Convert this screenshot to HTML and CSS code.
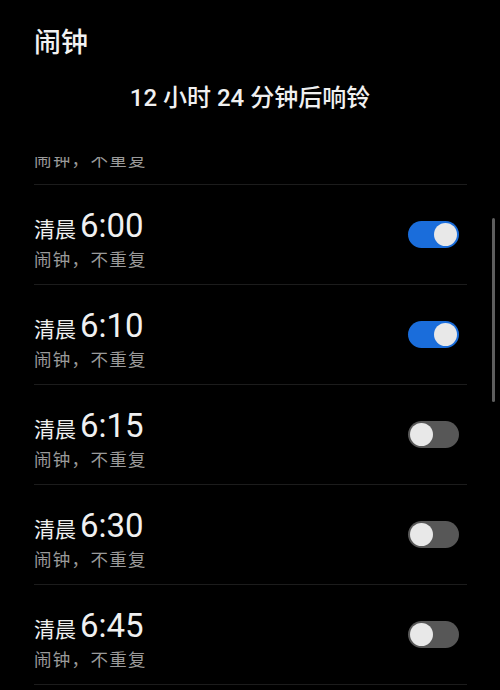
FILE: index.html
```html
<!DOCTYPE html>
<html lang="zh-CN">
<head>
<meta charset="utf-8">
<link rel="stylesheet" href="styles.css">
</head>
<body>
<div class="screen">
  <header class="header">
    <h1 class="title">闹钟</h1>
    <p class="next">12 小时 24 分钟后响铃</p>
  </header>
  <div class="list">
    <div class="list-inner">
      <div class="row">
        <div class="info">
          <div class="time"><span class="period">清晨</span><span class="clock">5:45</span></div>
          <div class="desc">闹钟，不重复</div>
        </div>
        <div class="switch off"><span class="knob"></span></div>
      </div>
      <div class="row">
        <div class="info">
          <div class="time"><span class="period">清晨</span><span class="clock">6:00</span></div>
          <div class="desc">闹钟，不重复</div>
        </div>
        <div class="switch on"><span class="knob"></span></div>
      </div>
      <div class="row">
        <div class="info">
          <div class="time"><span class="period">清晨</span><span class="clock">6:10</span></div>
          <div class="desc">闹钟，不重复</div>
        </div>
        <div class="switch on"><span class="knob"></span></div>
      </div>
      <div class="row">
        <div class="info">
          <div class="time"><span class="period">清晨</span><span class="clock">6:15</span></div>
          <div class="desc">闹钟，不重复</div>
        </div>
        <div class="switch off"><span class="knob"></span></div>
      </div>
      <div class="row">
        <div class="info">
          <div class="time"><span class="period">清晨</span><span class="clock">6:30</span></div>
          <div class="desc">闹钟，不重复</div>
        </div>
        <div class="switch off"><span class="knob"></span></div>
      </div>
      <div class="row">
        <div class="info">
          <div class="time"><span class="period">清晨</span><span class="clock">6:45</span></div>
          <div class="desc">闹钟，不重复</div>
        </div>
        <div class="switch off"><span class="knob"></span></div>
      </div>
    </div>
  </div>
  <div class="scrollbar"></div>
</div>
</body>
</html>
```
FILE: styles.css
```css
html, body {
  margin: 0;
  padding: 0;
  background: #000;
}
body {
  font-family: "Roboto", "Noto Sans CJK SC", sans-serif;
  color: #f0f0f0;
}
.screen {
  position: relative;
  width: 500px;
  height: 690px;
  overflow: hidden;
  background: #000;
}
.header {
  height: 157px;
  padding: 0 34px;
  box-sizing: border-box;
}
.title {
  margin: 0;
  padding-top: 23px;
  font-family: "Noto Sans CJK SC", sans-serif;
  font-size: 27px;
  font-weight: 500;
  line-height: 36px;
  color: #f2f2f2;
}
.next {
  margin: 24px 0 0;
  text-align: center;
  font-family: "Roboto", "Noto Sans CJK SC", sans-serif;
  font-size: 24px;
  font-weight: 500;
  line-height: 30px;
  color: #f0f0f0;
}
.list {
  height: 533px;
  overflow: hidden;
}
.list-inner {
  margin: -72px 33px 0 34px;
}
.row {
  height: 100px;
  box-sizing: border-box;
  border-bottom: 1px solid #1c1c1c;
  display: flex;
  align-items: center;
  justify-content: space-between;
  padding: 0 8px 0 0;
}
.info {
  display: flex;
  flex-direction: column;
  padding-top: 10px;
}
.time {
  display: flex;
  align-items: baseline;
  line-height: 36px;
}
.period {
  font-family: "Noto Sans CJK SC", sans-serif;
  font-size: 21px;
  color: #f0f0f0;
  margin-right: 4px;
}
.clock {
  font-family: "Roboto", sans-serif;
  font-size: 33px;
  font-weight: 400;
  color: #f0f0f0;
}
.desc {
  font-family: "Noto Sans CJK SC", sans-serif;
  font-size: 17.5px;
  line-height: 26px;
  color: #9a9a9a;
  letter-spacing: 1.3px;
}
.switch {
  position: relative;
  width: 51px;
  height: 27px;
  border-radius: 14px;
  flex: none;
}
.switch.on {
  background: #1a6ddb;
}
.switch.off {
  background: #575757;
}
.knob {
  position: absolute;
  top: 2px;
  width: 23px;
  height: 23px;
  border-radius: 50%;
  background: #e8e8e8;
}
.switch.on .knob {
  right: 2px;
}
.switch.off .knob {
  left: 2px;
}
.scrollbar {
  position: absolute;
  left: 492px;
  top: 218px;
  width: 3px;
  height: 184px;
  border-radius: 2px;
  background: #5e5e5e;
}
```
